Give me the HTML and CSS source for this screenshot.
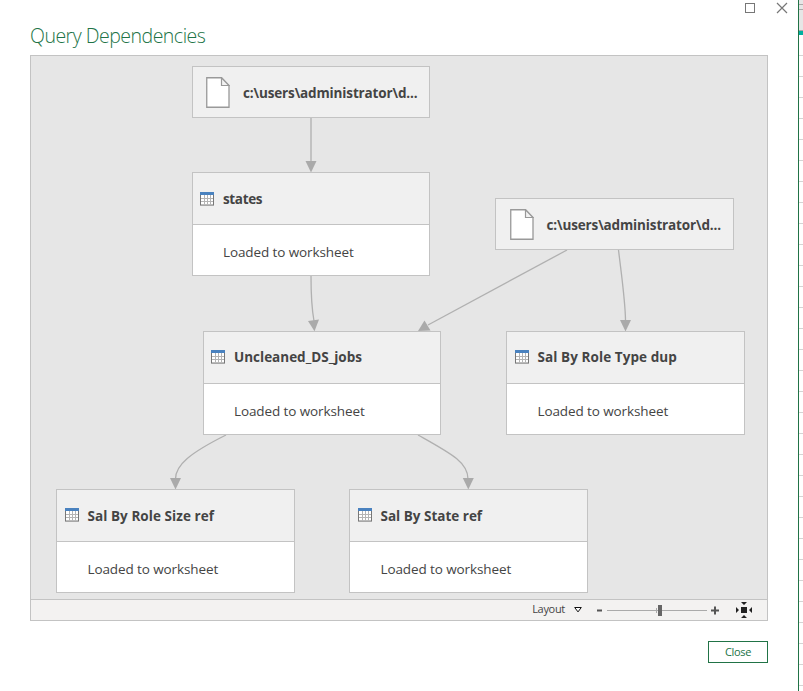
FILE: index.html
```html
<!DOCTYPE html>
<html lang="en">
<head>
<meta charset="utf-8">
<title>Query Dependencies</title>
<link rel="stylesheet" href="styles.css">
</head>
<body>
<svg width="0" height="0" class="defs" aria-hidden="true">
  <symbol id="table" viewBox="0 0 14 14">
    <rect x="0" y="0" width="14" height="13.6" fill="#777"/>
    <rect x="1" y="3" width="12" height="9.5" fill="#fff"/>
    <path d="M1 6.5h12M1 9.5h12M4.5 3v9.5M7.5 3v9.5M10.5 3v9.5" stroke="#b4b4b4"/>
    <rect x="0" y="0" width="14" height="3" fill="#4a82bf"/>
  </symbol>
  <symbol id="file" viewBox="0 0 24 31">
    <path d="M.75.75H15.500L23 8.500V30.250H.75Z" fill="#fff" stroke="#999" stroke-width="1.300"/>
    <path d="M15.500 .75V8.500H23Z" fill="#f3f3f3" stroke="#999" stroke-width="1.200"/>
  </symbol>
</svg>
<div class="window">
  <main class="dialog">
    <div class="window-controls">
      <svg width="10" height="10"><rect x=".5" y=".5" width="9" height="9" fill="none" stroke="#777"/></svg>
      <svg width="12" height="12"><path d="M1 1 11 11M11 1 1 11" stroke="#777" stroke-width="1.200"/></svg>
    </div>
    <h1 class="title">Query Dependencies</h1>
    <section class="panel">
      <div class="canvas">
        <svg class="edges" width="736" height="543" viewBox="31 56 736 543">
          <g fill="none" stroke="#b0b0b0" stroke-width="1.300">
            <path d="M311 118V162" stroke="#bebebe" stroke-width="1.800"/>
            <path d="M311 276C311 298 312 310 314 321"/>
            <path d="M567 250 428 325"/>
            <path d="M618.500 250C622 279 625.500 303 625.500 321"/>
            <path d="M226 435C190 453 175.500 465 175.500 479"/>
            <path d="M418 435C450 453 468 462 468 479"/>
          </g>
          <g fill="#aaa">
            <path d="M305.500 161H316.500L311 172.500Z"/>
            <path d="M308 321 319 319.500 314.500 331.300Z"/>
            <path d="M424.500 320.500 430.500 330.500 418 331Z"/>
            <path d="M620 320H631L625.500 331.500Z"/>
            <path d="M170 478H181L175.500 489.500Z"/>
            <path d="M462.800 478H473.800L468.300 489.500Z"/>
          </g>
        </svg>
        <article class="node source src-a"><svg class="file"><use href="#file"/></svg><b>c:\users\administrator\d...</b></article>
        <article class="node source src-b"><svg class="file"><use href="#file"/></svg><b>c:\users\administrator\d...</b></article>
        <article class="node states"><header><svg class="table"><use href="#table"/></svg><b>states</b></header><p>Loaded to worksheet</p></article>
        <article class="node jobs"><header><svg class="table"><use href="#table"/></svg><b>Uncleaned_DS_jobs</b></header><p>Loaded to worksheet</p></article>
        <article class="node wide dup"><header><svg class="table"><use href="#table"/></svg><b>Sal By Role Type dup</b></header><p>Loaded to worksheet</p></article>
        <article class="node wide size-ref"><header><svg class="table"><use href="#table"/></svg><b>Sal By Role Size ref</b></header><p>Loaded to worksheet</p></article>
        <article class="node wide state-ref"><header><svg class="table"><use href="#table"/></svg><b>Sal By State ref</b></header><p>Loaded to worksheet</p></article>
      </div>
      <footer class="toolbar">
        <span class="layout">Layout</span>
        <svg class="caret" width="8" height="6"><path d="M.7.500H7.300L4 4.900Z" fill="#fff" stroke="#111"/></svg>
        <svg class="zoom" width="124" height="12">
          <path d="M1 6.500H6" stroke="#555" stroke-width="2"/>
          <path d="M11 6.500H111" stroke="#aaa"/>
          <path d="M60.500 4V9" stroke="#aaa"/>
          <rect x="62" y="1" width="4" height="11" fill="#666"/>
          <path d="M115 6.500H123M119 2.500V10.500" stroke="#555" stroke-width="2"/>
        </svg>
        <svg class="fit" width="16" height="16" fill="#222"><path d="M5 5H11V11H5ZM5 0H11L8 3ZM5 16H11L8 13ZM0 5V11L3 8ZM16 5V11L13 8Z"/></svg>
      </footer>
    </section>
    <button class="close">Close</button>
  </main>
  <aside class="sheet"><div class="sheet-head"></div><div class="sheet-rows"></div></aside>
</div>
</body>
</html>
```

FILE: styles.css
```css
* { box-sizing: border-box; }
body { margin: 0; background: #fff; color: #444; font-family: "Open Sans", "Noto Sans", sans-serif; overflow: hidden; }
svg { display: block; flex: none; }
.defs { position: absolute; }
.window { display: flex; width: 803px; height: 691px; }
.dialog { display: flex; flex-direction: column; width: 798px; padding-left: 30px; }
.window-controls { display: flex; justify-content: flex-end; align-items: center; gap: 21px; height: 16px; padding-right: 10px; }
.title { height: 39px; margin: 0; padding-top: 6px; color: #217346; font-size: 19.5px; line-height: 28px; font-weight: 300; letter-spacing: -.5px; white-space: nowrap; }
.panel { width: 738px; height: 566px; border: 1px solid #c3c3c3; }
.canvas { position: relative; height: 543px; background: #e6e6e6; }
.edges { position: absolute; inset: 0; }
.node { position: absolute; width: 238px; height: 104px; border: 1px solid #c3c3c3; background: #fff; white-space: nowrap; }
.node header { display: flex; height: 52px; padding: 0 7px; border-bottom: 1px solid #c3c3c3; background: #f0f0f0; gap: 9px; }
.node b { font-size: 13.5px; line-height: 18px; margin-top: 16px; }
.node p { margin: 0; padding: 17px 0 0 30px; line-height: 20px; font-size: 13.5px; letter-spacing: -.1px; }
.table { width: 14px; height: 14px; margin-top: 18px; }
.wide { width: 239px; }
.wide header { padding-left: 8px; gap: 8.500px; }
.wide p { padding-left: 30.500px; }
.source { display: flex; height: 52px; background: #f0f0f0; padding-left: 13px; gap: 13px; }
.source b { margin-top: 17px; letter-spacing: -.14px; }
.file { width: 24px; height: 31px; margin-top: 10px; }
.src-a { left: 161px; top: 10px; }
.src-b { left: 464px; top: 142px; width: 239px; padding-left: 14px; gap: 12.500px; }
.states { left: 161px; top: 116px; }
.states b { margin-top: 17px; letter-spacing: -.35px; }
.states .table { margin-top: 19px; }
.jobs { left: 172px; top: 275px; }
.dup { left: 475px; top: 275px; }
.dup b { letter-spacing: .08px; }
.size-ref { left: 25px; top: 433px; }
.state-ref { left: 318px; top: 433px; }
.size-ref b, .state-ref b { margin-top: 17px; }
.size-ref b { letter-spacing: .06px; }
.toolbar { display: flex; align-items: center; justify-content: flex-end; height: 21px; padding-right: 15px; border-top: 1px solid #c3c3c3; background: #f3f2f1; font-size: 11px; }
.layout { margin: -2px 9px 0 0; line-height: 18px; letter-spacing: -.3px; }
.caret { margin-right: 14px; }
.zoom { margin-right: 16px; }
.close { align-self: flex-end; width: 60px; height: 22px; margin: 20px 30px 0 0; padding: 0; border: 1px solid #217346; background: #fff; color: #217346; font: 11px "Open Sans", sans-serif; line-height: 18px; letter-spacing: -.3px; }
.sheet { width: 5px; border-left: 1px solid #217346; }
.sheet-head { height: 35px; background: linear-gradient(#aaa, #aaa) 0 4px / 100% 1px no-repeat, linear-gradient(#aaa, #aaa) 0 9px / 100% 1px no-repeat, linear-gradient(#aaa, #aaa) 0 30px / 100% 1px no-repeat, linear-gradient(#e6e6e6 31px, #00b0a0 31px 35px); }
.sheet-rows { height: 656px; background: repeating-linear-gradient(#fff 0 20px, #d4d4d4 20px 21px); }
```
